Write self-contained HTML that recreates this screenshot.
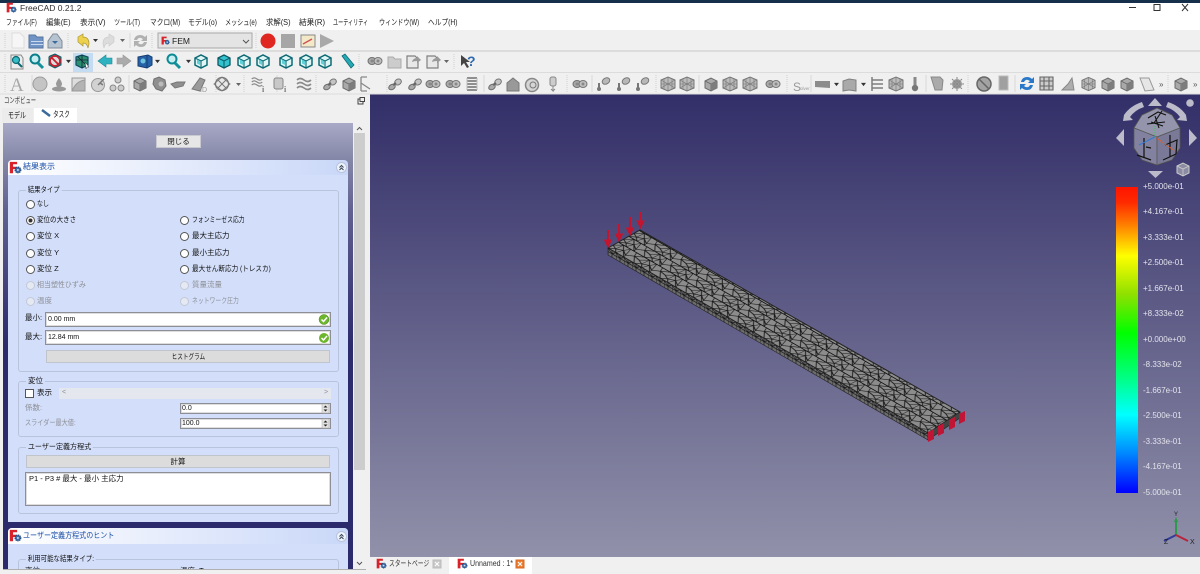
<!DOCTYPE html>
<html lang="ja"><head><meta charset="utf-8"><title>FreeCAD</title>
<style>
html,body{margin:0;padding:0;width:1200px;height:574px;overflow:hidden;background:#f0f0f0}
body{position:relative;font-family:"Liberation Sans","Noto Sans CJK JP",sans-serif;font-size:7.5px;color:#111}
#w{position:absolute;left:0;top:0;width:1200px;height:574px;filter:blur(.3px)}
.a,.t{position:absolute}
.t{white-space:nowrap;line-height:12px;height:12px;transform-origin:left center}
.m{top:17px;color:#222;font-size:8px}
.g{position:absolute;left:18px;width:319px;border:1px solid #b9c4dc;border-radius:3px}
.lg{background:#d3dffa;padding:0 2px}
.r{position:absolute;width:7px;height:7px;border:1px solid #555;border-radius:50%;background:#fff}
.r.d{border-color:#c3c8d4;background:#e4e9f4}
.dis{color:#8d8f96}
.inp{position:absolute;background:#fff;border:1px solid #8e8e96;box-sizing:border-box;box-shadow:inset 0 0 0 1px #ddd}
.btn{position:absolute;background:#dcdcdc;border:1px solid #c0c4cc;box-sizing:border-box;text-align:center;line-height:11px;color:#111}
.cb{color:#e2e2ec;font-size:8px;left:1143px}
</style></head><body><div id="w">
<div class="a" style="left:0;top:0;width:1200px;height:3px;background:#16304c"></div>
<div class="a" style="left:0;top:3px;width:1200px;height:27px;background:#fff"></div>
<div class="a" style="left:0;top:30px;width:1200px;height:64px;background:#f0f0f0"></div>
<div class="a" style="left:0;top:50px;width:1200px;height:2px;background:#dcdcdc"></div>
<div class="a" style="left:0;top:72px;width:1200px;height:1px;background:#dcdcdc"></div>
<div class="a" style="left:3px;top:94px;width:367px;height:480px;background:#f0f0f0"></div>

<span class="t" style="left:20px;top:2px;font-size:8.5px;color:#333">FreeCAD 0.21.2</span>
<span class="t m" style="left:6px;transform:scaleX(.73)">ファイル(F)</span>
<span class="t m" style="left:46px;transform:scaleX(.92)">編集(E)</span>
<span class="t m" style="left:80px;transform:scaleX(.96)">表示(V)</span>
<span class="t m" style="left:114px;transform:scaleX(.76)">ツール(T)</span>
<span class="t m" style="left:150px;transform:scaleX(.84)">マクロ(M)</span>
<span class="t m" style="left:188px;transform:scaleX(.86)">モデル(o)</span>
<span class="t m" style="left:225px;transform:scaleX(.76)">メッシュ(e)</span>
<span class="t m" style="left:266px;transform:scaleX(.92)">求解(S)</span>
<span class="t m" style="left:299px;transform:scaleX(.96)">結果(R)</span>
<span class="t m" style="left:333px;transform:scaleX(.64)">ユーティリティ</span>
<span class="t m" style="left:379px;transform:scaleX(.76)">ウィンドウ(W)</span>
<span class="t m" style="left:428px;transform:scaleX(.84)">ヘルプ(H)</span>

<!-- window buttons -->
<svg class="a" style="left:1120px;top:3px" width="80" height="14"><path d="M9 4.500h7" stroke="#333" fill="none"/><rect x="34" y="1.500" width="6" height="6" fill="none" stroke="#333"/><path d="M62 1l6 7M68 1l-6 7" stroke="#333" fill="none"/></svg>

<!-- 3D viewport -->
<div class="a" style="left:370px;top:94px;width:830px;height:463px;background:linear-gradient(#322e68,#9191aa)"></div>

<!-- Left panel -->
<span class="t" style="left:4px;top:95px;font-size:8px;color:#333;transform:scaleX(.67)">コンボビュー</span>
<svg class="a" style="left:357px;top:97px" width="8" height="8"><rect x="1" y="2" width="5" height="5" fill="none" stroke="#444"/><rect x="3" y="0.500" width="4.500" height="4" fill="#eee" stroke="#444"/></svg>
<div class="a" style="left:2px;top:108px;width:31px;height:15px;background:#ececec"></div>
<div class="a" style="left:34px;top:108px;width:43px;height:15px;background:#fff"></div>
<span class="t" style="left:8px;top:110px;font-size:8px;transform:scaleX(.75)">モデル</span>
<span class="t" style="left:53px;top:109px;font-size:8px;transform:scaleX(.7)">タスク</span>
<svg class="a" style="left:41px;top:109px" width="11" height="10"><path d="M1 1l8 6" stroke="#3a6a9a" stroke-width="2.500"/></svg>

<!-- task area -->
<div class="a" style="left:3px;top:123px;width:350px;height:446px;background:linear-gradient(#a8a9c6 0,#8587a8 8%,#5f5f90 20%,#2b2a6c 50%,#2b2a6c 100%);overflow:hidden">
</div>
<div class="a" style="left:353px;top:123px;width:13px;height:446px;background:#f0f0f0"></div>
<div class="a" style="left:354px;top:133px;width:11px;height:337px;background:#cdcdcd"></div>
<svg class="a" style="left:354px;top:124px" width="11" height="446"><path d="M3 6l2.500-2.500L8 6M3 438l2.500 2.500L8 438" fill="none" stroke="#555"/></svg>
<div class="a" style="left:3px;top:569px;width:363px;height:1px;background:#b0b0b0"></div>

<div class="btn" style="left:156px;top:135px;width:45px;height:13px;background:#e6e6e6;border-color:#c8c8d0">閉じる</div>

<!-- section 1 -->
<div class="a" style="left:8px;top:160px;width:340px;height:15px;border-radius:4px 4px 0 0;background:linear-gradient(90deg,#fff,#c9d7f8)"></div>
<div class="a" style="left:8px;top:175px;width:340px;height:347px;background:#d3dffa"></div>
<span class="t" style="left:23px;top:161px;font-size:8px;color:#1b4fa8">結果表示</span>
<svg class="a" style="left:336px;top:162px" width="11" height="11"><circle cx="5.500" cy="5.500" r="5" fill="#eef2fb" stroke="#b8c4de"/><path d="M3.500 5.500l2-2 2 2M3.500 8l2-2 2 2" fill="none" stroke="#345" /></svg>

<div class="g" style="top:190px;height:180px"></div>
<span class="t lg" style="left:26px;top:184px;transform:scaleX(.85)">結果タイプ</span>
<div class="r" style="left:26px;top:200px"></div><span class="t" style="left:37px;top:198px;transform:scaleX(.8)">なし</span>
<div class="r" style="left:26px;top:216px"></div><svg class="a" style="left:26px;top:216px" width="9" height="9"><circle cx="4.500" cy="4.500" r="2" fill="#333"/></svg><span class="t" style="left:37px;top:214px;transform:scaleX(.87)">変位の大きさ</span>
<div class="r" style="left:26px;top:232px"></div><span class="t" style="left:37px;top:230px">変位 X</span>
<div class="r" style="left:26px;top:249px"></div><span class="t" style="left:37px;top:247px">変位 Y</span>
<div class="r" style="left:26px;top:265px"></div><span class="t" style="left:37px;top:263px">変位 Z</span>
<div class="r d" style="left:26px;top:281px"></div><span class="t dis" style="left:37px;top:279px;transform:scaleX(.93)">相当塑性ひずみ</span>
<div class="r d" style="left:26px;top:297px"></div><span class="t dis" style="left:37px;top:295px">温度</span>
<div class="r" style="left:180px;top:216px"></div><span class="t" style="left:192px;top:214px;transform:scaleX(.78)">フォンミーゼス応力</span>
<div class="r" style="left:180px;top:232px"></div><span class="t" style="left:192px;top:230px">最大主応力</span>
<div class="r" style="left:180px;top:249px"></div><span class="t" style="left:192px;top:247px">最小主応力</span>
<div class="r" style="left:180px;top:265px"></div><span class="t" style="left:192px;top:263px;transform:scaleX(.88)">最大せん断応力 (トレスカ)</span>
<div class="r d" style="left:180px;top:281px"></div><span class="t dis" style="left:192px;top:279px">質量流量</span>
<div class="r d" style="left:180px;top:297px"></div><span class="t dis" style="left:192px;top:295px;transform:scaleX(.78)">ネットワーク圧力</span>

<span class="t" style="left:25px;top:312px">最小:</span>
<div class="inp" style="left:45px;top:312px;width:286px;height:15px"></div>
<span class="t" style="left:48px;top:314px;font-size:7px">0.00 mm</span>
<span class="t" style="left:25px;top:331px">最大:</span>
<div class="inp" style="left:45px;top:330px;width:286px;height:15px"></div>
<span class="t" style="left:48px;top:332px;font-size:7px">12.84 mm</span>
<svg class="a" style="left:318px;top:313px" width="12" height="32"><g><circle cx="6" cy="6.500" r="5" fill="#6cb52d" stroke="#4b8a1c" stroke-width=".5"/><path d="M3.500 6.500l2 2 3.500-4" fill="none" stroke="#fff" stroke-width="1.500"/></g><circle cx="6" cy="25" r="5" fill="#6cb52d"/><path d="M3.500 25l2 2 3.500-4" fill="none" stroke="#fff" stroke-width="1.500"/></svg>
<div class="btn" style="left:46px;top:350px;width:284px;height:13px"><span style="display:inline-block;transform:scaleX(.75)">ヒストグラム</span></div>

<div class="g" style="top:381px;height:54px"></div>
<span class="t lg" style="left:26px;top:375px">変位</span>
<div class="a" style="left:25px;top:389px;width:7px;height:7px;border:1px solid #555;background:#fff"></div>
<span class="t" style="left:37px;top:387px">表示</span>
<div class="a" style="left:59px;top:388px;width:272px;height:11px;background:#e4e7ee"></div>
<span class="t dis" style="left:62px;top:387px;font-size:7px">&lt;</span><span class="t dis" style="left:324px;top:387px;font-size:7px">&gt;</span>
<span class="t dis" style="left:25px;top:402px">係数:</span>
<div class="inp" style="left:180px;top:403px;width:151px;height:11px"></div>
<span class="t" style="left:182px;top:403px;font-size:7px">0.0</span>
<span class="t dis" style="left:25px;top:417px;transform:scaleX(.82)">スライダー最大値:</span>
<div class="inp" style="left:180px;top:418px;width:151px;height:11px"></div>
<span class="t" style="left:182px;top:418px;font-size:7px">100.0</span>
<svg class="a" style="left:321px;top:404px" width="9" height="25"><rect x="1" y="0" width="7" height="9" fill="#e2e2e2" stroke="#aaa" stroke-width=".5"/><path d="M2.500 3.500l2-2 2 2zM2.500 5.500l2 2 2-2z" fill="#222"/><rect x="1" y="15" width="7" height="9" fill="#e2e2e2" stroke="#aaa" stroke-width=".5"/><path d="M2.500 18.500l2-2 2 2zM2.500 20.500l2 2 2-2z" fill="#222"/></svg>

<div class="g" style="top:447px;height:65px"></div>
<span class="t lg" style="left:26px;top:441px;transform:scaleX(.94)">ユーザー定義方程式</span>
<div class="btn" style="left:26px;top:455px;width:304px;height:13px">計算</div>
<div class="inp" style="left:25px;top:472px;width:306px;height:34px"></div>
<span class="t" style="left:29px;top:473px">P1 - P3 # 最大 - 最小 主応力</span>

<!-- section 2 -->
<div class="a" style="left:8px;top:528px;width:340px;height:41px;background:#d3dffa;border-radius:4px 4px 0 0;overflow:hidden">
<div class="a" style="left:0;top:0;width:340px;height:16px;background:linear-gradient(90deg,#fff,#c9d7f8)"></div>
<span class="t" style="left:15px;top:2px;font-size:8px;color:#1b4fa8;transform:scaleX(.88)">ユーザー定義方程式のヒント</span>
<svg class="a" style="left:328px;top:2.500px" width="11" height="11"><circle cx="5.500" cy="5.500" r="5" fill="#eef2fb" stroke="#b8c4de"/><path d="M3.500 5.500l2-2 2 2M3.500 8l2-2 2 2" fill="none" stroke="#345"/></svg>
<div class="g" style="left:10px;top:31px;height:30px"></div>
<span class="t lg" style="left:18px;top:25px;transform:scaleX(.86)">利用可能な結果タイプ:</span>
<span class="t" style="left:17px;top:37px">変位:</span>
<span class="t" style="left:172px;top:37px">温度: T</span>
</div>

<!-- bottom tabs -->
<div class="a" style="left:370px;top:557px;width:830px;height:17px;background:#f0f0f0"></div>
<div class="a" style="left:449px;top:557px;width:83px;height:17px;background:#fff"></div>
<span class="t" style="left:389px;top:558px;font-size:8px;color:#333;transform:scaleX(.72)">スタートページ</span>
<span class="t" style="left:470px;top:558px;font-size:8px;color:#333;transform:scaleX(.88)">Unnamed : 1*</span>
<svg class="a" style="left:432px;top:559px" width="10" height="10"><rect x="1" y="1" width="8" height="8" fill="#c8c8c8" stroke="#bbb"/><path d="M3 3l4 4M7 3l-4 4" stroke="#fff"/></svg>
<svg class="a" style="left:515px;top:559px" width="10" height="10"><rect x="1" y="1" width="8" height="8" fill="#ea7b2e" stroke="#d86a20"/><path d="M3 3l4 4M7 3l-4 4" stroke="#fff" stroke-width="1.200"/></svg>

<!-- all SVG icons + 3D content -->
<svg class="a" style="left:0;top:0" width="1200" height="574" viewBox="0 0 1200 574">
<defs>
<symbol id="logo" viewBox="0 0 16 16"><path d="M1 1h9v3H5v3h4v3H5v5H1z" fill="#d8232a"/><circle cx="11" cy="11" r="3.500" fill="#3f6fa8" stroke="#1f4a80" stroke-width="1.500" stroke-dasharray="1.500 .8"/><circle cx="11" cy="11" r="1.200" fill="#dde"/></symbol>
<symbol id="cT" viewBox="0 0 16 16"><path d="M2 5l6-3 6 3v7l-6 3-6-3z" fill="#33c3cf" stroke="#0d5a66" stroke-width="1.300"/><path d="M2 5l6 3 6-3M8 8v7" fill="none" stroke="#0d5a66" stroke-width="1"/></symbol>
<symbol id="cW" viewBox="0 0 16 16"><path d="M2 5l6-3 6 3v7l-6 3-6-3z" fill="#e0f6f6" stroke="#0d6a74" stroke-width="1.500"/><path d="M2 5l6 3 6-3M8 8v7" fill="none" stroke="#0d6a74" stroke-width="1.100"/><path d="M4 6.500l3 1.500v4l-3-1.500z" fill="#5fd0d8"/></symbol>
<symbol id="cG" viewBox="0 0 16 16"><path d="M2 5l6-3 6 3v7l-6 3-6-3z" fill="#a9a9a9" stroke="#6b6b6b"/><path d="M2 5l6 3 6-3M8 8v7" fill="none" stroke="#666" stroke-width=".8"/><path d="M8 8l6-3v7l-6 3z" fill="#7d7d7d"/></symbol>
<symbol id="mesh" viewBox="0 0 16 16"><path d="M1 4l7-3 7 3v8l-7 3-7-3z" fill="#bbb" stroke="#777"/><path d="M1 8l14 0M4 3v10M8 1v14M12 3v10M1 4l14 8M15 4L1 12" stroke="#777" stroke-width=".6" fill="none"/></symbol>
<symbol id="pipe" viewBox="0 0 16 16"><ellipse cx="5" cy="11" rx="3.500" ry="2.500" transform="rotate(-30 5 11)" fill="#aaa" stroke="#6e6e6e"/><ellipse cx="11" cy="6" rx="3.500" ry="2.800" transform="rotate(-30 11 6)" fill="#c4c4c4" stroke="#777"/><path d="M6 9l3-2" stroke="#666" stroke-width="2"/></symbol>
<symbol id="pipe2" viewBox="0 0 16 16"><ellipse cx="5" cy="8" rx="4" ry="3.500" fill="#aaa" stroke="#707070"/><ellipse cx="11" cy="8" rx="4" ry="3.500" fill="#c0c0c0" stroke="#777"/><circle cx="11" cy="8" r="1.500" fill="#888"/><circle cx="5" cy="8" r="1.500" fill="#888"/></symbol>
<symbol id="term" viewBox="0 0 16 16"><path d="M4 7v5" stroke="#777" stroke-width="2"/><circle cx="4" cy="13" r="2" fill="#777"/><ellipse cx="11" cy="5" rx="4" ry="3" transform="rotate(-30 11 5)" fill="#b8b8b8" stroke="#777"/></symbol>
<symbol id="spring" viewBox="0 0 16 16"><path d="M3 2h10M3 5h10M3 8h10M3 11h10M3 14h10" stroke="#8f8f8f" stroke-width="2"/><path d="M3 2v12M13 2v12" stroke="#bbb"/></symbol>
<symbol id="waves" viewBox="0 0 16 16"><path d="M1 4q3-3 7 0t7 0M1 8q3-3 7 0t7 0M1 12q3-3 7 0t7 0" fill="none" stroke="#8a8a8a" stroke-width="1.600"/></symbol>
<symbol id="sm" viewBox="0 0 6 6"><path d="M0 1h6L3 5z" fill="#333"/></symbol>
</defs>

<!-- logos -->
<use href="#logo" x="6" y="2" width="11" height="11"/>
<use href="#logo" x="9" y="161" width="13" height="13"/>
<use href="#logo" x="9" y="529" width="13" height="13"/>
<use href="#logo" x="376" y="558" width="11" height="11"/>
<use href="#logo" x="457" y="558" width="11" height="11"/>

<!-- separators -->
<g stroke="#cfcfcf" stroke-dasharray="1 1">
<path d="M5 33v15M68 33v15M152 33v15M256 33v15M5 54v15M359 54v15M454 54v15M5 75v17M216 75v17M244 75v17M316 75v17M387 75v17M567 75v17M656 75v17M787 75v17M968 75v17M1168 75v17"/>
</g>
<path d="M130 33v15M32 75v16M129 75v17M277 75v17M484 75v17M592 75v17M699 75v17M811 75v17M926 75v17M1015 75v17" stroke="#d8d8d8"/>
<path d="M0 94h370M370 94h830" stroke="#dcdcdc"/>

<!-- toolbar 1 -->
<path d="M12 33h8l4 4v11H12z" fill="#f6f6f6" stroke="#ddd"/>
<path d="M29 35h6l2 2h6v11H29z" fill="#6f93c4" stroke="#58759f"/><path d="M31 41h12v1H31zM31 44h12v1H31z" fill="#c7d8ef"/>
<path d="M48 41l5-7h4l5 7v7H48z" fill="#b6c3d0" stroke="#7f8b98"/><path d="M52 41l3 3 3-3z" fill="#3d6b9e"/>
<path d="M78 37l5-3v3q6 0 6 7l-1 4q-1-5-5-5v3l-5-4z" fill="#eed14b" stroke="#a79538" stroke-width=".7"/>
<path d="M93 39h5l-2.500 3z" fill="#333"/>
<path d="M114 37l-5-3v3q-6 0-6 7l1 4q1-5 5-5v3l5-4z" fill="#dcdcdc" stroke="#ccc" stroke-width=".7"/>
<path d="M120 39h5l-2.500 3z" fill="#666"/>
<path d="M134 40q1-5 6-5 3 0 5 2l2-2v6h-6l2-2q-4-3-6 1zM147 42q-1 5-6 5-3 0-5-2l-2 2v-6h6l-2 2q4 3 6-1z" fill="#b0b0b0"/>
<rect x="158" y="33" width="94" height="15" fill="#e4e4e4" stroke="#a8a8a8"/>
<use href="#logo" x="161" y="36" width="9" height="9"/>
<text x="172" y="44" font-size="8.500" fill="#222" font-family="Liberation Sans">FEM</text>
<path d="M243 40l3 3 3-3" fill="none" stroke="#555"/>
<circle cx="268" cy="41" r="7.500" fill="#df2620"/>
<rect x="281" y="34" width="14" height="14" fill="#a6a6a6"/>
<rect x="301" y="35" width="14" height="12" fill="#f3e8c8" stroke="#888"/><path d="M303 44l9-5" stroke="#c55" stroke-width="1.500"/>
<path d="M320 34l14 7-14 7z" fill="#a9a9a9"/>

<!-- toolbar 2 -->
<path d="M11 55h10l2 3v11H11z" fill="#eee" stroke="#888"/><circle cx="16" cy="60" r="3.500" fill="#37bcc8" stroke="#0d6a74" stroke-width="1.200"/><path d="M18 63l4 4" stroke="#0d6a74" stroke-width="2"/>
<circle cx="35" cy="59" r="4.500" fill="#c6eef0" stroke="#0b7e8a" stroke-width="2"/><path d="M38 63l5 5" stroke="#13909c" stroke-width="3"/>
<path d="M50 56l5-2 6 3v8l-6 3-6-3v-8z" fill="#2a8f99" stroke="#0c5a64"/><circle cx="55" cy="61" r="5" fill="#ddd" stroke="#c8202c" stroke-width="1.800"/><path d="M52 58l6 6" stroke="#c8202c" stroke-width="1.800"/>
<use href="#sm" x="66" y="59" width="5" height="5"/>
<rect x="73" y="53" width="20" height="19" fill="#c3dcf2"/>
<path d="M76 57l6-2 6 2v8l-6 3-6-3z" fill="#2a8f70" stroke="#0e4a60" stroke-width="1.200"/><path d="M76 60h12M82 55v13M78 57l8 8" stroke="#123" stroke-width=".8"/><path d="M85 62l4 5-2 0-1 2z" fill="#fff" stroke="#333" stroke-width=".5"/>
<path d="M98 61l8-6v3h6v6h-6v3z" fill="#2fb2c0" stroke="#1a8a96" stroke-width=".6"/>
<path d="M131 61l-8-6v3h-6v6h6v3z" fill="#ababab" stroke="#999" stroke-width=".6"/>
<path d="M138 57l10-2 4 2v8l-5 3-9-2z" fill="#2762a8" stroke="#153d72"/><path d="M147 55v13" stroke="#153d72"/><circle cx="143" cy="61" r="2.500" fill="#6ec3dc"/>
<use href="#sm" x="155" y="59" width="5" height="5"/>
<circle cx="172" cy="59" r="4.500" fill="#c6eef0" stroke="#0b8a96" stroke-width="2"/><path d="M175 63l5 5" stroke="#13909c" stroke-width="3"/>
<use href="#sm" x="186" y="59" width="5" height="5"/>
<use href="#cW" x="193" y="53" width="16" height="16"/>
<use href="#cT" x="216" y="53" width="16" height="16"/>
<use href="#cW" x="236" y="53" width="16" height="16"/>
<use href="#cW" x="255" y="53" width="16" height="16"/>
<use href="#cW" x="278" y="53" width="16" height="16"/>
<use href="#cW" x="298" y="53" width="16" height="16"/>
<use href="#cW" x="317" y="53" width="16" height="16"/>
<path d="M342 56l3-2 9 11-3 3z" fill="#25a9b5" stroke="#0d6a74" stroke-width=".8"/>
<use href="#pipe2" x="367" y="53" width="16" height="16"/>
<path d="M388 57h5l2 2h6v9h-13z" fill="#ccc" stroke="#aaa"/>
<path d="M407 56h8l3 3v9h-11z" fill="#e8e8e8" stroke="#808080" stroke-width="1.200"/><path d="M412 62q1-4 5-4v-2l4 4-4 3v-2q-3 0-5 1z" fill="#999"/>
<path d="M427 56h8l3 3v9h-11z" fill="#e8e8e8" stroke="#808080" stroke-width="1.200"/><path d="M432 62q1-4 5-4v-2l4 4-4 3v-2q-3 0-5 1z" fill="#999"/>
<path d="M444 60h5l-2.500 3z" fill="#666"/>
<path d="M461 55l0 11 3-3 3 5 2-1-3-5h4z" fill="#444"/>
<text x="467" y="66" font-size="14" font-weight="bold" fill="#2f6ab0" font-family="Liberation Sans">?</text>

<!-- toolbar 3 -->
<text x="10" y="91" font-size="19" fill="#a8a8a8" font-family="Liberation Serif">A</text>
<circle cx="40" cy="84" r="7" fill="#c4c4c4" stroke="#9c9c9c"/>
<ellipse cx="59" cy="89" rx="7" ry="2.500" fill="#999"/><path d="M59 78q3 4 3 6a3 3 0 0 1-6 0q0-2 3-6z" fill="#999"/>
<path d="M72 78h13v13H72z" fill="#ddd" stroke="#999"/><path d="M72 91q4-10 13-11v11z" fill="#b3b3b3" stroke="#999"/>
<circle cx="98" cy="85" r="6.500" fill="#d2d2d2" stroke="#999"/><path d="M98 85l6-6M100 83l3 2" stroke="#777" stroke-width="1.400"/>
<circle cx="113" cy="88" r="3" fill="#ccc" stroke="#888"/><circle cx="121" cy="88" r="3" fill="#ccc" stroke="#888"/><circle cx="118" cy="80" r="3" fill="#ccc" stroke="#888"/>
<use href="#cG" x="132" y="76" width="16" height="16"/>
<path d="M154 79l5-2 6 3 1 6-4 5-6-2-3-5z" fill="#8f8f8f" stroke="#707070"/><circle cx="161" cy="84" r="2.500" fill="#bbb"/>
<path d="M171 84l6-2h8l-2 4-8 2z" fill="#8f8f8f" stroke="#777"/>
<path d="M192 89l8-11 5 2-5 11z" fill="#9a9a9a" stroke="#777"/>
<text x="200" y="92" font-size="7" fill="#999">ID</text>
<path d="M222 77l8 7-8 7-8-7z" fill="#e9e9e9" stroke="#888"/><circle cx="222" cy="84" r="6.500" fill="none" stroke="#777" stroke-width="1.200"/><path d="M218 80l8 8M226 80l-8 8" stroke="#777"/>
<path d="M236 83h5l-2.500 3z" fill="#666"/>
<use href="#waves" x="251" y="76" width="12" height="12"/><text x="262" y="92" font-size="8" font-weight="bold" fill="#777" font-family="Liberation Serif">i</text>
<rect x="274" y="78" width="9" height="11" rx="2" fill="#c8c8c8" stroke="#888"/><text x="284" y="92" font-size="8" font-weight="bold" fill="#777" font-family="Liberation Serif">i</text>
<use href="#waves" x="296" y="76" width="16" height="16"/>
<use href="#pipe" x="322" y="76" width="16" height="16"/>
<use href="#cG" x="341" y="76" width="16" height="16"/>
<path d="M361 77v14M361 83l9 6M367 77h-6M361 91h6" stroke="#888" fill="none" stroke-width="1.300"/>
<use href="#pipe" x="387" y="76" width="16" height="16"/>
<use href="#pipe" x="407" y="76" width="16" height="16"/>
<use href="#pipe2" x="425" y="76" width="16" height="16"/>
<use href="#pipe2" x="445" y="76" width="16" height="16"/>
<use href="#spring" x="464" y="76" width="16" height="16"/>
<use href="#pipe" x="487" y="76" width="16" height="16"/>
<path d="M513 78l6 5v8h-12v-8z" fill="#999" stroke="#777"/>
<circle cx="532" cy="85" r="6.500" fill="#d5d5d5" stroke="#888" stroke-width="1.500"/><circle cx="533" cy="85" r="3" fill="none" stroke="#777"/>
<rect x="550" y="77" width="6" height="9" rx="2" fill="#ccc" stroke="#888"/><path d="M553 86v5l-2-2M553 91l2-2" stroke="#888" fill="none"/>
<use href="#pipe2" x="572" y="76" width="16" height="16"/>
<use href="#term" x="595" y="76" width="16" height="16"/>
<use href="#term" x="615" y="76" width="16" height="16"/>
<use href="#term" x="634" y="76" width="16" height="16"/>
<use href="#mesh" x="660" y="76" width="16" height="16"/>
<use href="#mesh" x="679" y="76" width="16" height="16"/>
<use href="#cG" x="703" y="76" width="16" height="16"/>
<use href="#mesh" x="722" y="76" width="16" height="16"/>
<use href="#mesh" x="742" y="76" width="16" height="16"/>
<use href="#pipe2" x="765" y="76" width="16" height="16"/>
<text x="793" y="91" font-size="12" fill="#999" font-family="Liberation Sans">S</text><text x="800" y="90" font-size="4.500" fill="#999" font-family="Liberation Sans">olver</text>
<path d="M815 81h15v7l-15-1z" fill="#8c8c8c"/>
<use href="#sm" x="834" y="82" width="5" height="5"/>
<path d="M843 81l6-2 7 1v11l-7-1-6 1z" fill="#a9a9a9" stroke="#808080"/>
<use href="#sm" x="861" y="82" width="5" height="5"/>
<path d="M872 77v14M872 80h11M872 84h11M872 88h11" stroke="#7d7d7d" stroke-width="1.500"/>
<use href="#mesh" x="888" y="76" width="16" height="16"/>
<path d="M915 77v9" stroke="#888" stroke-width="3"/><circle cx="915" cy="88" r="3.200" fill="#777"/>
<path d="M931 77h9l3 3-1 10h-7z" fill="#aaa" stroke="#888"/>
<circle cx="957" cy="84" r="5" fill="#999"/><path d="M950 84h14M957 77v14M952 79l10 10M962 79l-10 10" stroke="#888" stroke-dasharray="2 1"/>
<circle cx="984" cy="84" r="7" fill="#a3a3a3" stroke="#666" stroke-width="1.500"/><path d="M979 79l10 10" stroke="#666" stroke-width="1.500"/>
<rect x="999" y="76" width="9" height="14" fill="#a0a0a0" stroke="#bbb"/>
<path d="M1021 82q1-5 6-5 3 0 5 2l2-2v6h-6l2-2q-4-3-6 1z" fill="#2a78c8"/><path d="M1033 85q-1 5-6 5-3 0-5-2l-2 2v-6h6l-2 2q4 3 6-1z" fill="#2a78c8"/>
<path d="M1040 77h13v13h-13zM1044 77v13M1049 77v13M1040 81h13M1040 86h13" fill="#ccc" stroke="#666" stroke-width="1.100"/>
<path d="M1062 90l6-6 4-6 2 12z" fill="#adadad" stroke="#888"/>
<use href="#mesh" x="1081" y="76" width="15" height="16"/>
<use href="#cG" x="1100" y="76" width="16" height="16"/>
<use href="#cG" x="1119" y="76" width="16" height="16"/>
<path d="M1140 78l9 0 5 12-9 1z" fill="#e6e6e6" stroke="#999"/>
<text x="1159" y="87" font-size="8" fill="#555" font-family="Liberation Sans">»</text>
<use href="#cG" x="1173" y="76" width="16" height="16"/>
<text x="1193" y="87" font-size="8" fill="#555" font-family="Liberation Sans">»</text>

<!-- beam mesh -->
<defs>
<pattern id="tri" patternUnits="userSpaceOnUse" width="80" height="20" patternTransform="matrix(.325 .188 .52 -.2925 608 248)">
<rect width="80" height="20" fill="#8c8c8c"/>
<path d="M0 0H80M0 20H80M0 10L14 6L30 11L46 5L62 12L80 10M0 0L14 6L24 0L30 11L48 0L46 5M46 5L62 12L80 0M0 10L16 20L30 11L38 20L46 5M62 12L56 20M62 12L80 20M14 6L16 20" stroke="#151515" stroke-width="1.500" fill="none"/>
</pattern>
<pattern id="side" patternUnits="userSpaceOnUse" width="8" height="7" patternTransform="matrix(1 .578 0 1 608 248)">
<rect width="8" height="7" fill="#6c6c6c"/>
<path d="M0 0h8M0 3.500h8M0 0v7M4 0v7M0 0l4 3.500M4 3.500l4-3.500" stroke="#151515" stroke-width=".7" fill="none"/>
</pattern>
</defs>
<path d="M608 248L640 230 960 412 928 433z" fill="url(#tri)" stroke="#222"/>
<path d="M608 248L928 433V440L608 255z" fill="url(#side)" stroke="#222" stroke-width=".6"/>
<path d="M928 433L960 412V418L928 440z" fill="#444" stroke="#222" stroke-width=".6"/>
<!-- arrows -->
<g fill="#c3152f" stroke="#c3152f">
<path d="M608 230v11" stroke-width="2"/><path d="M604.500 240h7L608 247z"/>
<path d="M619 224v11" stroke-width="2"/><path d="M615.500 234h7L619 241z"/>
<path d="M630 217v11" stroke-width="2"/><path d="M626.500 228h7l-3.500 7z"/>
<path d="M640.500 212v10" stroke-width="2"/><path d="M637 221h7l-3.500 7z"/>
</g>
<g fill="#c01535">
<path d="M928 432l6-3v10l-6 3z"/><path d="M938 426l6-3v10l-6 3z"/><path d="M949 420l6-3v10l-6 3z"/><path d="M959 414l6-3v10l-6 3z"/>
</g>

<!-- navi cube -->
<g>
<path d="M1142 115l15-7 15 7 8 13v20l-8 12-15 5-15-5-8-12v-20z" fill="#8a8aa2" stroke="#444" stroke-width="1"/>
<path d="M1142 115l15-7 15 7 8 13-23 9-23-9z" fill="#9494ac" stroke="#555" stroke-width=".7"/>
<path d="M1134 128l23 9v28l-15-5-8-12z" fill="#8282a0" stroke="#555" stroke-width=".7"/>
<path d="M1180 128l-23 9v28l15-5 8-12z" fill="#7a7a98" stroke="#555" stroke-width=".7"/>
<path d="M1148 118l10-6 8 3M1147 124l18-2M1155 116l4 12M1162 111l-8 12M1151 122l12 4" stroke="#111" stroke-width="1.100" fill="none"/>
<path d="M1137 155l14 5M1144 138v20M1146 147l5 1" stroke="#111" stroke-width="1.200" fill="none"/>
<path d="M1165 145l12-5-1 14M1163 160l13-6M1170 135v22" stroke="#111" stroke-width="1.200" fill="none"/>
<path d="M1155 137v-12" stroke="#2fd04f" stroke-dasharray="1 1"/><path d="M1155 137l-16 8" stroke="#2b7bd8"/><path d="M1155 137l20 14" stroke="#e0602a" stroke-dasharray="2 1"/>
<g fill="#bbbbca">
<path d="M1155 98l7 8h-14z"/><path d="M1116 138l8-9v17z"/><path d="M1197 138l-8-9v17z"/><path d="M1148 171h15l-7.500 7z"/>
<path d="M1124 115q6-9 18-13l2 5q-9 3-14 10l3 3-10 1z"/>
<path d="M1186 115q-6-9-18-13l-2 5q9 3 14 10l-3 3 10 1z"/>
</g>
<circle cx="1190" cy="103" r="3.800" fill="#bbbbca"/>
<path d="M1177 166l6-3 6 3v7l-6 3-6-3z" fill="#8b8ba3" stroke="#ccc"/><path d="M1177 166l6 3 6-3M1183 169v7" fill="none" stroke="#ccc" stroke-width=".8"/>
</g>

<!-- colorbar -->
<defs><linearGradient id="cb" x1="0" y1="0" x2="0" y2="1">
<stop offset="0" stop-color="#ff1500"/><stop offset=".05" stop-color="#ff2a00"/><stop offset=".12" stop-color="#ff7a00"/><stop offset=".225" stop-color="#ffff00"/><stop offset=".35" stop-color="#90e000"/><stop offset=".477" stop-color="#00ff00"/><stop offset=".62" stop-color="#00ff80"/><stop offset=".745" stop-color="#00ffff"/><stop offset=".87" stop-color="#0088ff"/><stop offset="1" stop-color="#0000ff"/>
</linearGradient></defs>
<rect x="1116" y="187" width="22" height="306" fill="url(#cb)"/>

<!-- axis -->
<path d="M1176 535v-16" stroke="#2c9a4a" stroke-width="2"/><path d="M1174 522l2-5 2 5z" fill="#2c9a4a"/>
<path d="M1176 535l-12 6" stroke="#303a9a" stroke-width="2"/>
<path d="M1176 535l12 6" stroke="#b8253a" stroke-width="2"/>
<text x="1190" y="544" font-size="7" fill="#222" font-family="Liberation Sans">X</text>
<text x="1164" y="544" font-size="7" fill="#222" font-family="Liberation Sans">Z</text>
<text x="1174" y="516" font-size="6" fill="#222" font-family="Liberation Sans">Y</text>
</svg>

<span class="t cb" style="top:181px">+5.000e-01</span>
<span class="t cb" style="top:206px">+4.167e-01</span>
<span class="t cb" style="top:232px">+3.333e-01</span>
<span class="t cb" style="top:257px">+2.500e-01</span>
<span class="t cb" style="top:283px">+1.667e-01</span>
<span class="t cb" style="top:308px">+8.333e-02</span>
<span class="t cb" style="top:334px">+0.000e+00</span>
<span class="t cb" style="top:359px">-8.333e-02</span>
<span class="t cb" style="top:385px">-1.667e-01</span>
<span class="t cb" style="top:410px">-2.500e-01</span>
<span class="t cb" style="top:436px">-3.333e-01</span>
<span class="t cb" style="top:461px">-4.167e-01</span>
<span class="t cb" style="top:487px">-5.000e-01</span>
</div></body></html>
